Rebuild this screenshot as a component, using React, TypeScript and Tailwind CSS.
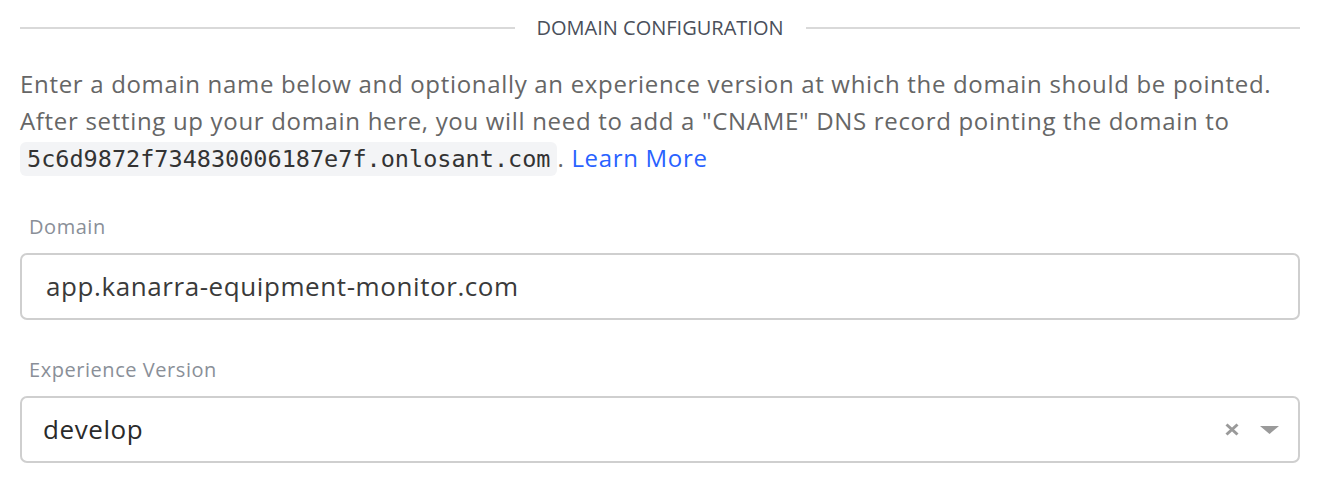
import React from "react";

export default function App() {
  return (
    <div className="w-[1322px] h-[494px] bg-white pl-[20px] pr-[22px] pt-[14px]" style={{ fontFamily: "'Open Sans', sans-serif" }}>
      <div className="flex items-center">
        <div className="flex-1 h-[2px] bg-[#d9d9d9]" />
        <div className="px-[22px] text-[20px] leading-[28px] text-[#4a4f5a]">DOMAIN CONFIGURATION</div>
        <div className="flex-1 h-[2px] bg-[#d9d9d9]" />
      </div>
      <p className="mt-[23px] text-[24px] leading-[37px] tracking-[0.68px] text-[#666] whitespace-nowrap">
        Enter a domain name below and optionally an experience version at which the domain should be pointed.
        <br />
        After setting up your domain here, you will need to add a "CNAME" DNS record pointing the domain to
        <br />
        <code className="bg-[#f3f4f6] rounded-[6px] px-[7px] py-[3px] text-[23.5px] tracking-normal text-[#333]" style={{ fontFamily: "'DejaVu Sans Mono', monospace" }}>
          5c6d9872f734830006187e7f.onlosant.com
        </code>
        . <span className="text-[#2962ff]">Learn More</span>
      </p>
      <div className="mt-[35px] pl-[9px] text-[20px] leading-[28px] tracking-[0.55px] text-[#8a8f98]">Domain</div>
      <div className="mt-[12px] h-[67px] border-2 border-[#cfcfcf] rounded-[7px] flex items-center px-[24px] text-[26px] tracking-[0.58px] text-[#3a3a3a]">
        app.kanarra-equipment-monitor.com
      </div>
      <div className="mt-[36px] pl-[9px] text-[20px] leading-[28px] tracking-[0.55px] text-[#8a8f98]">Experience Version</div>
      <div className="mt-[12px] h-[67px] border-2 border-[#cfcfcf] rounded-[7px] flex items-center pl-[21px] pr-[19px] text-[26px] tracking-[0.58px] text-[#2a2a2a]">
        <span className="flex-1">develop</span>
        <svg width="14" height="13" viewBox="0 0 14 13" className="mr-[21px]">
          <path d="M1.5 1.5 L12.5 11.5 M12.5 1.5 L1.5 11.5" stroke="#9a9a9a" strokeWidth="3" />
        </svg>
        <svg width="19" height="8" viewBox="0 0 19 8"><path d="M0 0 L19 0 L9.5 8 Z" fill="#9a9a9a" /></svg>
      </div>
    </div>
  );
}
